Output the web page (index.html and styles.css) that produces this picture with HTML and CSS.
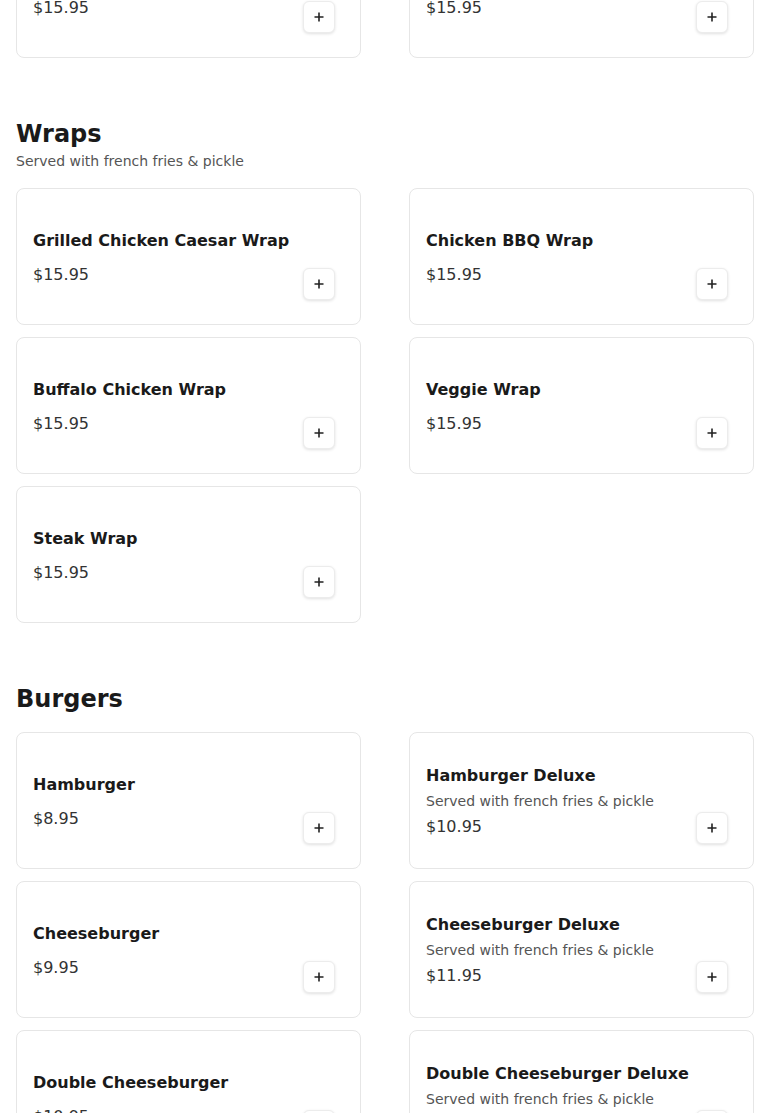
FILE: index.html
```html
<html><head><title>Menu</title>
<link rel="stylesheet" href="styles.css">
</head>
<body>
<div id="menu">
  <section class="menu-section menu-section-scrolled">
    <div class="item-grid">
      <div class="item-card">
        <div class="item-info">
          <div class="item-name">Turkey Club</div>
          <div class="item-price">$15.95</div>
        </div>
        <button class="add-btn"><svg viewBox="0 0 12 12" width="12" height="12"><path d="M6 1.5v9M1.5 6h9" /></svg></button>
      </div>
      <div class="item-card">
        <div class="item-info">
          <div class="item-name">BLT Club</div>
          <div class="item-price">$15.95</div>
        </div>
        <button class="add-btn"><svg viewBox="0 0 12 12" width="12" height="12"><path d="M6 1.5v9M1.5 6h9" /></svg></button>
      </div>
    </div>
  </section>

  <section class="menu-section">
    <h2>Wraps</h2>
    <p class="section-note">Served with french fries &amp; pickle</p>
    <div class="item-grid">
      <div class="item-card">
        <div class="item-info">
          <div class="item-name">Grilled Chicken Caesar Wrap</div>
          <div class="item-price">$15.95</div>
        </div>
        <button class="add-btn"><svg viewBox="0 0 12 12" width="12" height="12"><path d="M6 1.5v9M1.5 6h9" /></svg></button>
      </div>
      <div class="item-card">
        <div class="item-info">
          <div class="item-name">Chicken BBQ Wrap</div>
          <div class="item-price">$15.95</div>
        </div>
        <button class="add-btn"><svg viewBox="0 0 12 12" width="12" height="12"><path d="M6 1.5v9M1.5 6h9" /></svg></button>
      </div>
      <div class="item-card">
        <div class="item-info">
          <div class="item-name">Buffalo Chicken Wrap</div>
          <div class="item-price">$15.95</div>
        </div>
        <button class="add-btn"><svg viewBox="0 0 12 12" width="12" height="12"><path d="M6 1.5v9M1.5 6h9" /></svg></button>
      </div>
      <div class="item-card">
        <div class="item-info">
          <div class="item-name">Veggie Wrap</div>
          <div class="item-price">$15.95</div>
        </div>
        <button class="add-btn"><svg viewBox="0 0 12 12" width="12" height="12"><path d="M6 1.5v9M1.5 6h9" /></svg></button>
      </div>
      <div class="item-card">
        <div class="item-info">
          <div class="item-name">Steak Wrap</div>
          <div class="item-price">$15.95</div>
        </div>
        <button class="add-btn"><svg viewBox="0 0 12 12" width="12" height="12"><path d="M6 1.5v9M1.5 6h9" /></svg></button>
      </div>
    </div>
  </section>

  <section class="menu-section">
    <h2>Burgers</h2>
    <div class="item-grid">
      <div class="item-card">
        <div class="item-info">
          <div class="item-name">Hamburger</div>
          <div class="item-price">$8.95</div>
        </div>
        <button class="add-btn"><svg viewBox="0 0 12 12" width="12" height="12"><path d="M6 1.5v9M1.5 6h9" /></svg></button>
      </div>
      <div class="item-card">
        <div class="item-info">
          <div class="item-name">Hamburger Deluxe</div>
          <div class="item-desc">Served with french fries &amp; pickle</div>
          <div class="item-price">$10.95</div>
        </div>
        <button class="add-btn"><svg viewBox="0 0 12 12" width="12" height="12"><path d="M6 1.5v9M1.5 6h9" /></svg></button>
      </div>
      <div class="item-card">
        <div class="item-info">
          <div class="item-name">Cheeseburger</div>
          <div class="item-price">$9.95</div>
        </div>
        <button class="add-btn"><svg viewBox="0 0 12 12" width="12" height="12"><path d="M6 1.5v9M1.5 6h9" /></svg></button>
      </div>
      <div class="item-card">
        <div class="item-info">
          <div class="item-name">Cheeseburger Deluxe</div>
          <div class="item-desc">Served with french fries &amp; pickle</div>
          <div class="item-price">$11.95</div>
        </div>
        <button class="add-btn"><svg viewBox="0 0 12 12" width="12" height="12"><path d="M6 1.5v9M1.5 6h9" /></svg></button>
      </div>
      <div class="item-card">
        <div class="item-info">
          <div class="item-name">Double Cheeseburger</div>
          <div class="item-price">$10.95</div>
        </div>
        <button class="add-btn"><svg viewBox="0 0 12 12" width="12" height="12"><path d="M6 1.5v9M1.5 6h9" /></svg></button>
      </div>
      <div class="item-card">
        <div class="item-info">
          <div class="item-name">Double Cheeseburger Deluxe</div>
          <div class="item-desc">Served with french fries &amp; pickle</div>
          <div class="item-price">$12.95</div>
        </div>
        <button class="add-btn"><svg viewBox="0 0 12 12" width="12" height="12"><path d="M6 1.5v9M1.5 6h9" /></svg></button>
      </div>
    </div>
  </section>
</div>
</body>
</html>
```

FILE: styles.css
```css
body, html {
  margin: 0;
  padding: 0;
  background-color: #fff;
  font-family: 'DejaVu Sans', sans-serif;
  color: #1a1a1a;
}
#menu {
  padding: 0 16px;
  overflow: hidden;
}
.menu-section {
  margin-top: 60px;
}
/* page is scrolled: only the bottom of the previous section shows */
.menu-section-scrolled {
  margin-top: -79px;
}
h2 {
  margin: 0 0 1px 0;
  font-size: 24px;
  line-height: 32px;
  font-weight: bold;
  color: #1a1a1a;
}
.section-note {
  margin: 0;
  font-size: 14px;
  line-height: 20px;
  color: #555;
}
.item-grid {
  display: grid;
  grid-template-columns: 345px 345px;
  column-gap: 48px;
  row-gap: 12px;
  margin-top: 17px;
}
.menu-section-scrolled .item-grid {
  margin-top: 0;
}
.item-card {
  box-sizing: border-box;
  height: 137px;
  border: 1px solid #e6e6e6;
  border-radius: 8px;
  background-color: #fff;
  padding: 2px 25px 0 16px;
  display: flex;
  align-items: center;
}
.item-info {
  flex: 1;
}
.item-name {
  font-size: 16px;
  line-height: 24px;
  font-weight: bold;
  color: #1a1a1a;
  margin-bottom: 10px;
}
.item-desc {
  font-size: 14px;
  line-height: 20px;
  color: #555;
  margin: -7px 0 4px 0;
}
.item-price {
  font-size: 16px;
  line-height: 24px;
  color: #333;
}
.add-btn {
  align-self: flex-end;
  margin-bottom: 24px;
  width: 32px;
  height: 32px;
  padding: 0;
  border: 1px solid #ececec;
  border-radius: 6px;
  background-color: #fff;
  box-shadow: 0 1px 3px rgba(0, 0, 0, 0.12);
  display: flex;
  justify-content: center;
  align-items: center;
  cursor: pointer;
}
.add-btn svg path {
  stroke: #222;
  stroke-width: 1.6;
  fill: none;
}
```
